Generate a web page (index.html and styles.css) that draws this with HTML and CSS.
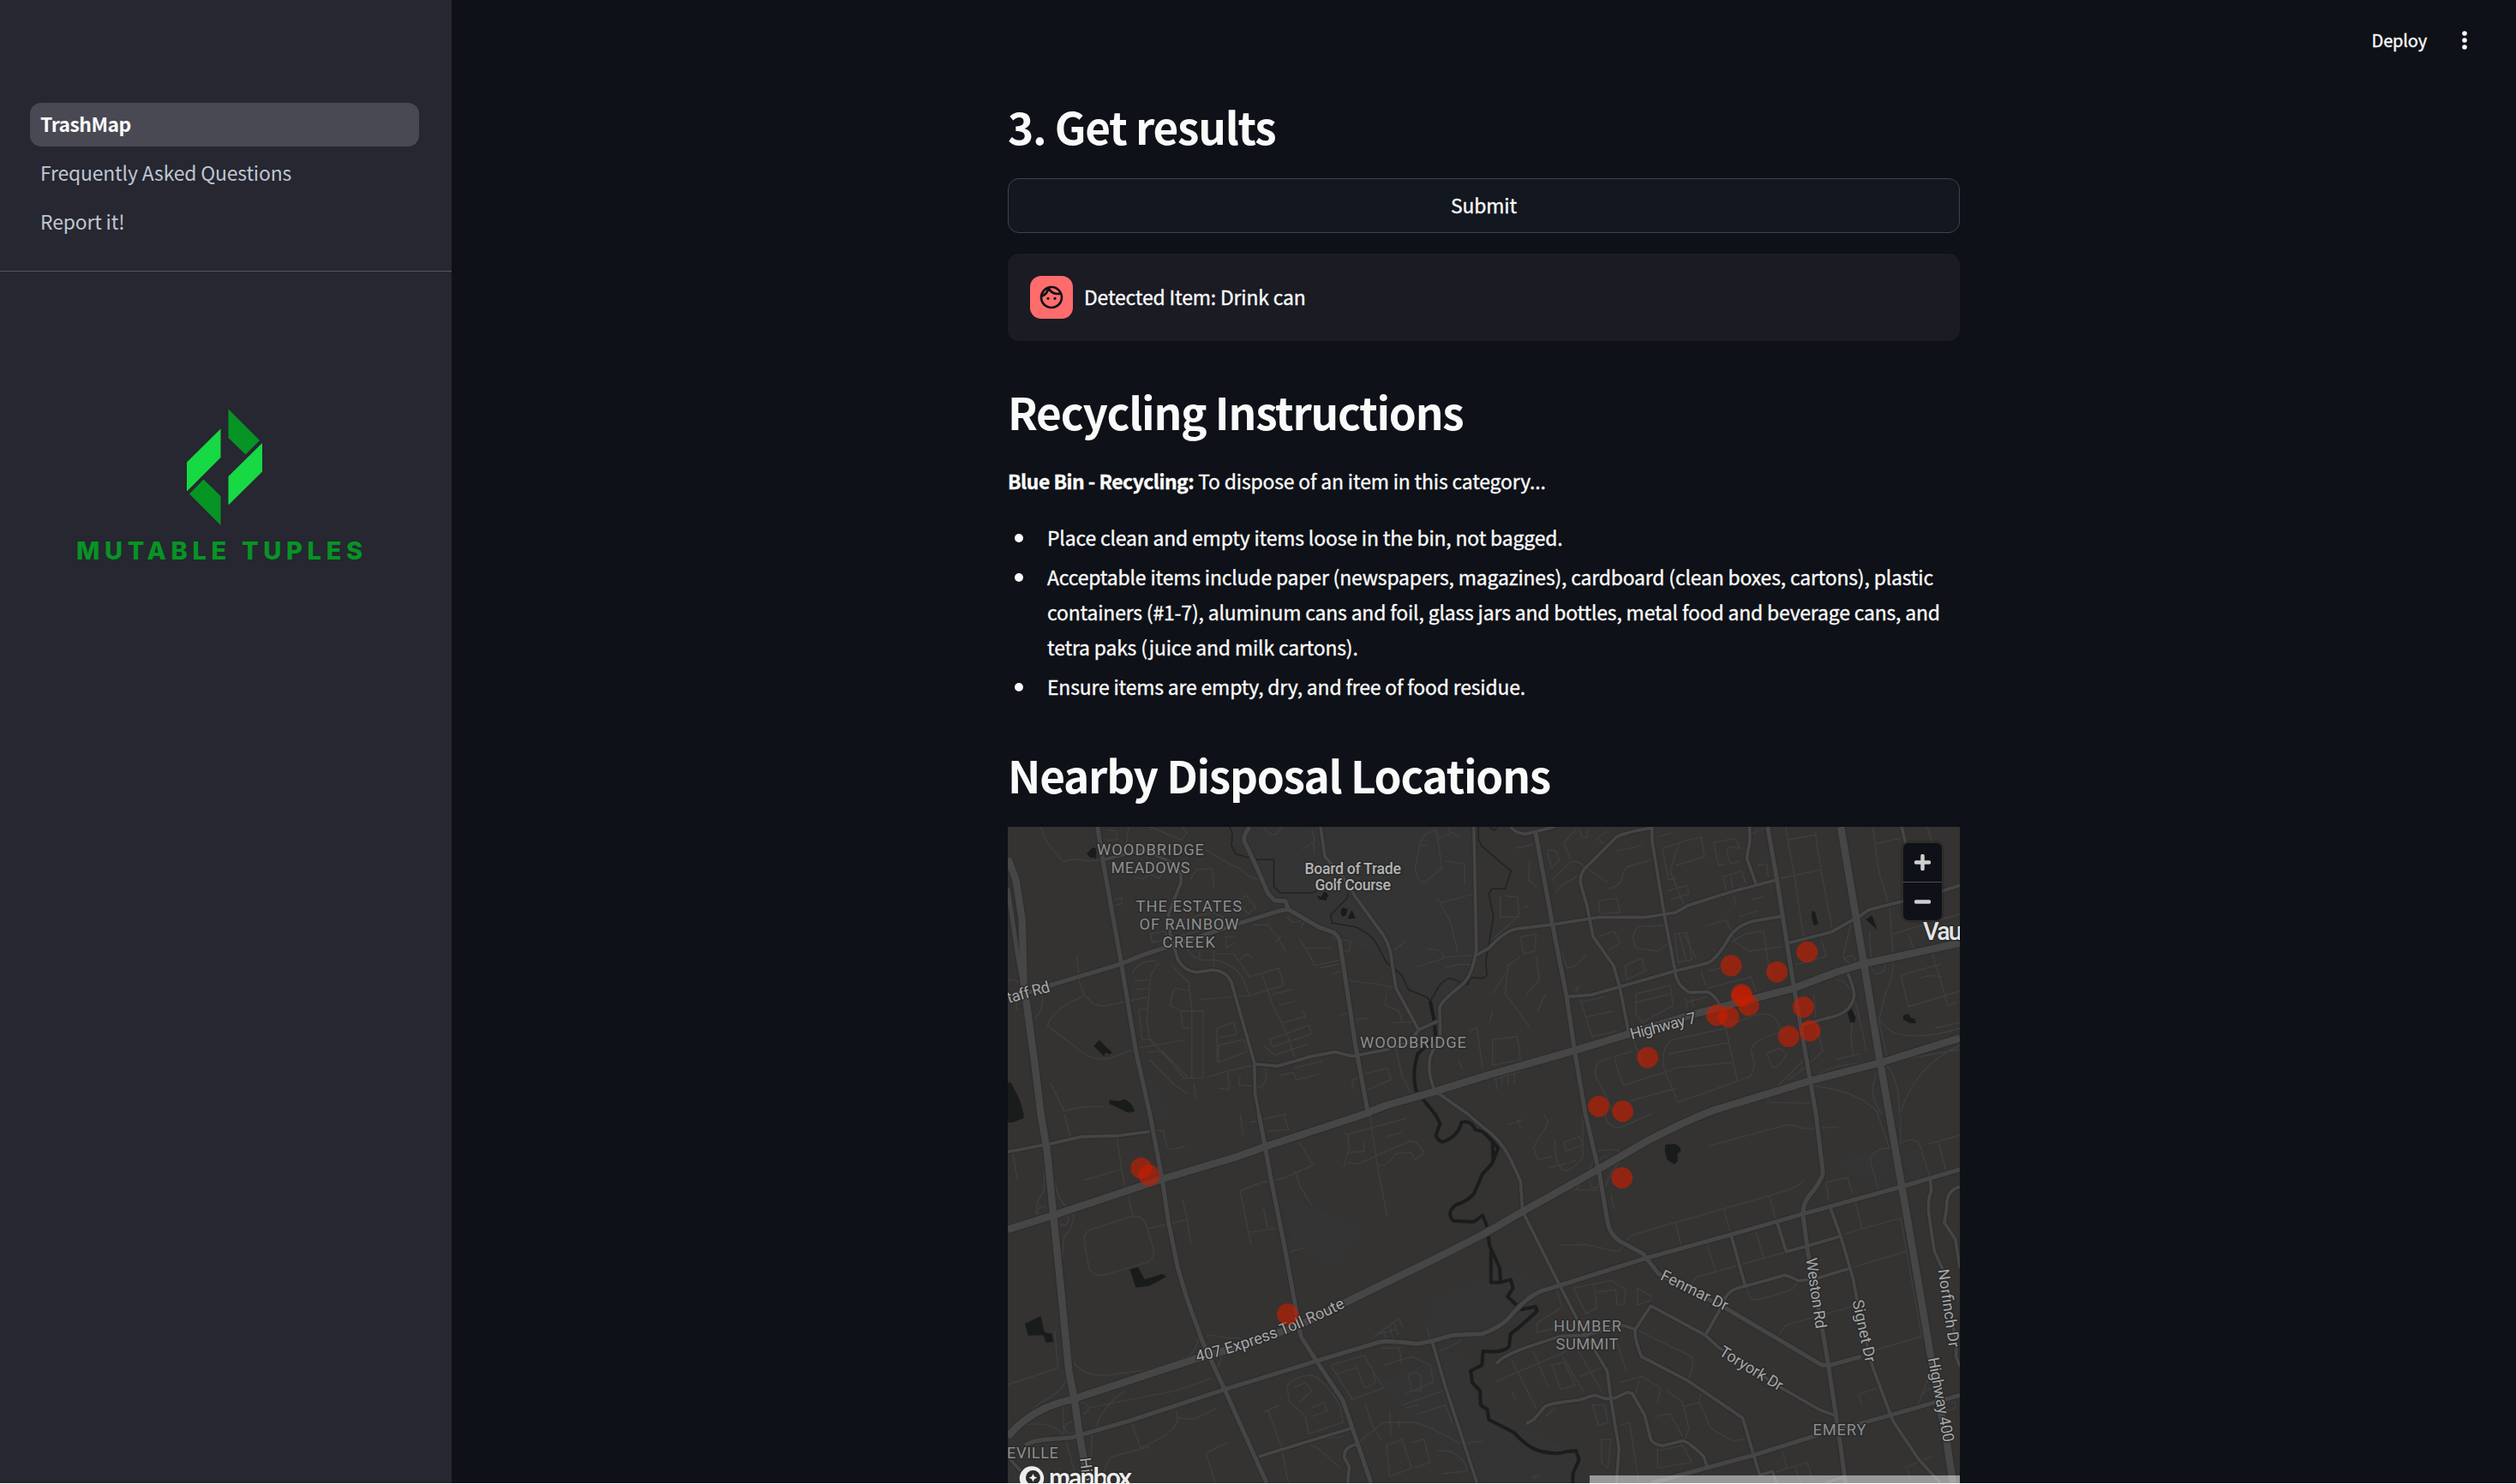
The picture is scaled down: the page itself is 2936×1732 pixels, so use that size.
FILE: index.html
```html
<!DOCTYPE html>
<html lang="en">
<head>
    <meta charset="UTF-8">
    <meta name="viewport" content="width=device-width, initial-scale=1.0">
    <title>TrashMap</title>
    <link rel="stylesheet" href="styles.css">
</head>
<body>
<div class="app">
    <aside class="sidebar">
        <nav class="sidebar-nav">
            <a class="active" href="#">TrashMap</a>
            <a href="#">Frequently Asked Questions</a>
            <a href="#">Report it!</a>
        </nav>
        <svg class="logo" width="340" height="190" viewBox="86 470 340 190">
            <g fill="#069424">
                <path d="M266.5 477.5 L303 514 L286.500 530.500 L266.500 511z"/>
                <path d="M237.500 559.500 L257.500 579 V613 L221 576.500z"/>
            </g>
            <g fill="#17d944">
                <path d="M257.500 500.500 V534 L218 573.500 V539.500z"/>
                <path d="M306 517 V550.500 L266.500 589.500 V556z"/>
            </g>
            <text x="89" y="653" textLength="334">MUTABLE TUPLES</text>
        </svg>
    </aside>

    <main class="main">
        <header class="toolbar">
            <span>Deploy</span>
            <svg width="8" height="24" viewBox="0 0 8 24" fill="#fafafa">
                <circle cx="4" cy="4" r="2.8"/><circle cx="4" cy="12" r="2.8"/><circle cx="4" cy="20" r="2.8"/>
            </svg>
        </header>

        <div class="content">
            <h2 class="first">3. Get results</h2>
            <button class="submit">Submit</button>
            <div class="chat-message">
                <span class="avatar">
                    <svg width="32" height="32" viewBox="0 0 24 24" fill="#0e1117">
                        <path d="M10.250 13a1.250 1.250 0 1 1-2.500 0 1.250 1.250 0 0 1 2.500 0zM15 11.750a1.250 1.250 0 1 0 0 2.500 1.250 1.250 0 0 0 0-2.500zM22 12c0 5.520-4.480 10-10 10S2 17.520 2 12 6.480 2 12 2s10 4.480 10 10zM10.660 4.120C12.060 6.440 14.600 8 17.500 8c.460 0 .910-.050 1.340-.120C17.440 5.560 14.900 4 12 4c-.460 0-.910.050-1.340.120zM4.420 9.470a8.046 8.046 0 0 0 3.660-4.440 8.046 8.046 0 0 0-3.660 4.440zM20 12c0-.780-.120-1.530-.330-2.240-.700.150-1.420.240-2.170.240a9.980 9.980 0 0 1-7.760-3.690A10.016 10.016 0 0 1 4 11.860c.010.040 0 .090 0 .140 0 4.410 3.590 8 8 8s8-3.590 8-8z"/>
                    </svg>
                </span>
                <p>Detected Item: Drink can</p>
            </div>

            <h2>Recycling Instructions</h2>
            <p class="intro"><strong>Blue Bin - Recycling:</strong> To dispose of an item in this category...</p>
            <ul class="steps">
                <li>Place clean and empty items loose in the bin, not bagged.</li>
                <li>Acceptable items include paper (newspapers, magazines), cardboard (clean boxes, cartons), plastic<br>containers (#1-7), aluminum cans and foil, glass jars and bottles, metal food and beverage cans, and<br>tetra paks (juice and milk cartons).</li>
                <li>Ensure items are empty, dry, and free of food residue.</li>
            </ul>

            <h2>Nearby Disposal Locations</h2>
            <div class="map">
                <svg class="map-base" viewBox="44 315 3056 2298" preserveAspectRatio="none">
                    <defs>
                        <g id="wide">
                            <path d="M44 425 L70 500 L90 640 L95 860 L130 1140 L150 1320 L170 1450 L190 1670 L215 1940 L240 2220 L258 2320 L275 2450 L290 2540 L300 2613"/>
                            <path d="M1200 1315 L1260 1290 L1420 1240 L1568 1190 L1858 1100 L2038 1040 L2248 970 L2568 880 L2700 825 L2788 795 L2938 760 L3100 722"/>
                            <path d="M44 1725 L190 1675 L480 1570 L540 1548 L780 1470 L870 1435 L1210 1313"/>
                            <path d="M2718 315 L2768 640 L2793 800 L2838 1100 L2873 1320 L2913 1570 L2968 1920 L3008 2180 L3058 2470 L3078 2613"/>
                            <path class="toll" d="M44 2450 Q120 2350 250 2320 L640 2180 Q950 2090 1120 1985 L1250 1915 L1420 1825 L1568 1743 L1708 1655 L1938 1515 L2088 1420 Q2208 1350 2308 1308 L2618 1205 L2848 1140 L3100 1055"/>
                        </g>
                        <g id="primary">
                            <path d="M332 315 L352 450 L408 790 L455 1100 L500 1320 L540 1550 L560 1700 L590 1860 L620 1970 L670 2120 L740 2285 L875 2613"/>
                            <path d="M44 530 L75 760 L95 880"/>
                            <path d="M2108 2613 L2438 2515 L2628 2450 L2878 2375 L3100 2305"/>
                            <path d="M44 920 L180 870 L408 795 Q480 760 560 735 L780 655 L920 608 L945 604"/>
                            <path d="M820 315 Q800 345 803 365 L840 450 L880 550 L900 572 L935 575 L945 604 L1040 665 L1090 685 Q1108 700 1110 720 L1160 1080 L1200 1315"/>
                            <path d="M850 1320 L870 1435 L890 1555 L935 1800 L985 2100 L1035 2185 L1120 2325 L1150 2420 L1210 2613"/>
                            <path d="M1738 335 L1793 660 L1838 910 L1863 1095 L1898 1320 L1943 1530 L1968 1690 Q1973 1740 2008 1765 L2083 1810 L2133 1880 L2348 2000 L2658 2200 L2683 2200 L2783 2170"/>
                            <path d="M2483 315 L2513 500 L2533 640 L2568 880 L2608 1130 L2638 1320 L2660 1520 Q2663 1545 2618 1605 Q2598 1630 2596 1670 L2613 1810 L2658 2070 L2678 2200 L2718 2490 L2733 2613"/>
                            <path d="M100 2480 Q130 2462 170 2460 L250 2453 L440 2393 L740 2285 L1035 2185 L1240 2118 Q1270 2113 1350 2125 Q1380 2125 1470 2095 L1568 2090 Q1618 2070 1648 2040 Q1708 1960 1758 1940 L1818 1920 L2093 1825 L2368 1742 L2598 1670 L2913 1575 L3100 1515"/>
                        </g>
                        <g id="secondary">
                            <path d="M352 430 L480 395 L570 440 L600 480 L600 510 L560 620 L565 690 L590 780 Q610 820 650 824 L700 816 Q745 818 762 860 L835 1140 L838 1250 L850 1320"/>
                            <path d="M835 1145 L910 1153 L1020 1118 L1095 1103 L1150 1118 L1260 1095 L1330 1070 L1365 1025 L1425 995"/>
                            <path d="M1048 315 L1062 420 L1120 490 L1160 560 L1250 695 Q1275 740 1277 790 L1290 880 L1365 1030"/>
                            <path d="M1540 315 L1548 745 L1540 790 Q1525 850 1500 870 Q1430 930 1430 950 L1432 1040 L1400 1120 Q1390 1180 1415 1240 L1520 1320 L1568 1365 Q1628 1410 1658 1480 L1690 1555 L1696 1660 L1813 1915 L1898 2095 L1968 2220 L1980 2320 L2006 2490 L1998 2613"/>
                            <path d="M1548 765 L1588 740 Q1638 680 1678 672 L1788 658 L1938 632 L2088 632 L2188 615 L2228 590 L2358 545 L2513 500"/>
                            <path d="M1658 315 Q1678 340 1708 340 L1798 315"/>
                            <path d="M2118 318 Q2038 330 1998 350 L1893 465 Q1878 490 1884 520 L1903 590 L1923 700 L1988 800 L2008 875 L2038 1040"/>
                            <path d="M2111 315 L2113 370 L2151 620 L2186 820 Q2190 870 2233 895 L2290 893 Q2318 905 2333 950"/>
                            <path d="M2425 315 L2426 365 L2416 425 L2446 515"/>
                            <path d="M1838 910 L1918 903 L2008 875 L2186 820 L2288 793 Q2318 780 2353 715 Q2378 660 2438 645 L2530 628"/>
                            <path d="M2548 722 L2688 683 L2783 625 L2808 605 L2918 575 L3043 540 L3100 520"/>
                            <path d="M2588 1010 L2698 978 Q2753 960 2761 905 Q2758 870 2740 828"/>
                            <path d="M2913 315 L2926 372"/>
                            <path d="M44 1453 L180 1425 L280 1400 L390 1397 L500 1382"/>
                            <path d="M850 2520 L1148 2420M1165 2478 Q1120 2485 1125 2525 L1140 2555 L1135 2613M1407 2120 L1450 2280 L1550 2613M44 2520 L85 2570"/>
                            <path d="M2513 1698 L2543 1803 L2613 1782 L2713 1750M2366 1745 L2411 1923"/>
                            <path d="M2683 1645 L2718 1750 L2758 1900 L2773 1990 L2818 2200 L2878 2375 L2888 2400 L2968 2530 L3038 2613"/>
                            <path d="M2283 2095 L2328 2010 Q2348 1940 2388 1930 L2538 1885 Q2553 1888 2583 1905 L2643 1895 L2743 1862"/>
                            <path d="M1613 2195 Q1628 2170 1708 2138 L1818 2098 L1898 2095 L2018 2060 L2058 2075"/>
                            <path d="M2283 2095 L2108 1992 L2058 2075 Q2053 2100 2078 2170 L2228 2255 L2403 2385 L2438 2515 L2458 2585 L2498 2572 L2513 2613"/>
                            <path d="M2283 2095 L2328 2140 L2528 2280 L2648 2355 L2703 2378"/>
                            <path d="M1708 2405 L1733 2390 L1768 2345 Q1783 2333 1878 2322 L1928 2305 L1963 2318 L1993 2315 L2033 2295 L2048 2298 L2088 2375 L2108 2460 Q2118 2480 2148 2482 L2208 2465 Q2228 2465 2278 2520 L2290 2560"/>
                            <path d="M3005 1545 L3008 1590 Q2993 1630 3003 1690 L3018 1800 L3043 1860 L3088 2120 L3088 2170 L3100 2205"/>
                            <path d="M3100 1575 Q3053 1590 3058 1650 L3050 1700 L3086 1760 L3100 1860M2668 2613 L2733 2588"/>
                        </g>
                    </defs>

                    <g class="park">
                        <path d="M740 315 H1540 L1548 745 L1420 980 L1280 800 L1090 685 L960 600 L900 560z"/>
                        <path d="M420 1010 L560 1320 H480z"/>
                        <path d="M930 1600 L1180 1720 L1100 1860 L960 1790z"/>
                        <path d="M1400 1980 L1568 1900 L1660 1870 L1780 1920 L1700 2050 L1568 2090 L1400 2110z"/>
                        <path d="M1240 2260 L1500 2140 L1568 2360 L1900 2520 L1850 2613 L1568 2613 L1350 2400z"/>
                        <path d="M2700 1480 L2850 1450 L2860 1550 L2740 1530zM2930 1440 L2980 1450 L2985 1550 L2940 1550z"/>
                    </g>

                    <g class="minor">
                        <path d="M150 315 Q165 370 190 395 L222 437 L260 427 L300 435 L350 430M362 325 L392 330 L395 360 L362 362M432 315 L425 372M500 315 L600 360 L620 335 L605 315M680 395 Q740 440 790 460 Q820 500 848 497M450 490 L480 497 L500 480 L530 495 L545 470M630 500 L650 465 L700 460 L705 530M385 570 L410 565 L410 585 L385 590"/>
                        <path d="M865 315 Q885 350 905 340 L925 315M1020 325 L1030 365 L990 395M1025 370 L1028 410M1385 340 L1420 325 L1430 400 L1438 460 L1380 510 Q1355 500 1352 460 L1368 370zM1365 380 L1392 380M1425 355 L1470 335 L1490 350M1460 315 L1465 350M1450 435 L1510 445 L1510 520"/>
                        <path d="M1422 570 L1435 580 L1540 550M1432 580 L1465 650 L1490 760M1358 805 L1460 770 L1545 765M1450 808 Q1500 790 1535 800M1390 745 Q1440 735 1442 775M1280 750 L1322 715"/>
                        <path d="M502 690 L550 680 L555 710 L508 720zM600 640 L700 615 L735 630 L735 665M785 575 L810 555 L840 600 L815 620zM590 700 L720 660M740 700 L775 700M745 700 L745 740 L775 720M830 660 L880 658 L910 700 L935 750M905 720 L920 698"/>
                        <path d="M265 765 L275 860 L290 905 L320 935 L350 943 L490 912M290 905 L235 935 Q175 980 172 1012 L290 1110 Q330 1135 375 1125 L455 1090 L620 1060M445 830 Q460 780 520 785M450 855 L495 850M455 885 L500 880"/>
                        <path d="M530 790 Q500 830 500 860 L490 1000 L500 1060 L560 1130 L610 1195 H670 V960 H600 L605 1020 H630M570 800 L625 860 L635 960 L635 1195M465 955 L490 950M465 955 L475 1060 L510 1060M490 1105 L540 1100 L620 1190M500 1130 L575 1215 L620 1250M570 905 L580 880 L630 890M570 905 L565 940 L600 960"/>
                        <path d="M620 740 Q640 790 705 780 Q780 800 800 850 L820 905M660 750 V780M705 750 V805M715 760 L770 760 L820 840M790 780 L810 760 L830 775M820 840 L915 810 L930 870 L825 905 L660 920M860 830 L895 940 L940 1040 L965 1125M895 900 L960 885M915 940 L970 925M930 1000 L1000 980 L990 960M885 1060 L1010 1010 L1020 1040 L895 1085zM865 1080 L900 1115 L1010 1075M715 1020 L770 1000 L780 1040 L720 1055M720 1080 L800 1060 L815 1100 L720 1140zM715 1020 L715 1140M690 1190 L750 1170 L830 1150M750 1170 L755 1235 L720 1230M790 1190 L785 1220 L860 1225 Q880 1190 870 1160M640 1210 L650 1270"/>
                        <path d="M940 630 L960 650 L1000 640 L985 670 M980 710 L1000 740 L1080 740M1000 740 L1030 800 L1120 780M1085 700 L1110 720M1085 830 L1120 820M1115 710 L1145 715 L1140 750 L1120 750M1045 810 L1130 790M1110 975 L1140 965M1130 850 L1180 860 L1230 865 L1290 880M1260 900 L1255 940 L1300 960 L1310 1000M1280 1000 L1340 1000M1160 990 L1200 985M920 1185 L960 1175 L970 1200 L1050 1180M960 1160 L1055 1135M1190 1180 L1260 1160 L1275 1200 L1200 1235M1150 1235 V1200 L1180 1190M1290 1090 L1310 1190 L1340 1250M1490 1130 L1505 1165M1520 1030 L1550 1020 L1568 1160"/>
                        <path d="M1678 390 L1740 373M1720 430 L1715 500 L1745 530M1775 400 Q1790 390 1803 400 L1815 430 L1790 460zM1790 500 L1850 440 Q1870 430 1890 450 L1970 510M1800 550 L1820 520 L1900 470M1830 370 L1870 320M1830 370 L1850 430M1875 320 L1890 355 L1905 350 L1905 320M1930 360 L1970 330M1940 360 L1960 375M1993 400 L2020 395 L2080 380M1970 530 Q2000 530 2015 500 Q2020 450 2050 450 L2110 430M1940 575 L2000 565 L2010 615 L1945 620zM1640 555 Q1650 560 1680 560 L1685 620 L1670 640 L1600 710M1625 555 V630 H1685M1700 600 L1715 590"/>
                        <path d="M2145 390 L2200 370 L2270 350 L2280 420 L2190 450M2200 370 L2170 470 L2215 590M2145 390 L2165 500 L2190 495M2160 540 L2225 520 L2230 550 L2170 570M2310 370 L2380 355 L2395 390 L2360 385 L2350 400 L2365 445 L2390 435M2310 370 L2325 450 L2350 445M2340 490 L2400 470 L2415 520 L2350 540zM2365 490 L2380 590M2430 570 L2470 560M2450 450 L2480 445 L2485 490M2130 350 L2180 335M2430 340 L2470 320"/>
                        <path d="M2540 315 L2568 480 L2598 700M2635 330 L2655 470 L2690 670M2550 360 L2640 342M2525 495 L2655 465M2820 315 L2840 470 L2870 580M2830 375 L2930 350M2995 315 L3020 400M2875 600 L2885 755M3100 620 L2885 690M2935 690 L2950 740M3010 755 L3040 860 L3060 940 L3090 930"/>
                        <path d="M2065 665 L2150 660 L2170 720 L2130 750 L2060 740 L2050 700zM2185 690 L2225 685 L2240 780 L2195 790zM2200 690 L2220 780M2215 690 L2255 780M2280 665 L2350 640 L2380 720 L2425 750 L2530 735M2365 720 L2410 690 L2470 680M2470 680 L2490 830M2390 630 L2450 610M2290 820 L2330 810M2290 880 L2430 840 L2445 890M2270 820 L2285 870M2560 800 L2670 770 L2655 710"/>
                        <path d="M1940 700 L1990 680 L2010 720 L1970 750M1820 750 L1840 810 L1870 800 L1900 760M2025 800 L2080 775 L2090 820 L2030 850zM2060 900 L2170 870 L2180 940 L2080 1000 L2060 970zM2060 930 L2170 900M2220 930 L2290 910M2220 915 L2225 950M2240 910 L2245 945M1870 880 L1920 1050 L2000 1030M1880 930 L1960 910M1900 980 L1990 960M1860 890 L1880 870"/>
                        <path d="M1690 700 L1740 690 L1735 750 L1700 760zM1690 770 L1650 800 L1640 900 L1670 940 L1720 1020M1740 770 L1750 850 L1710 900M1640 830 L1600 900M1600 960 L1590 1000M1770 900 L1745 960M1600 1060 L1680 1050 L1690 1130 L1600 1150zM1605 1200 L1690 1170M1610 1195 L1615 1235M1630 1190 V1225M1650 1185 V1220M1670 1180 V1215"/>
                        <path d="M2050 1050 L2080 1150M1990 1120 L2000 1160 L2020 1220M1990 1120 L2050 1100M1940 1140 Q1925 1160 1932 1190 L1960 1250 L1990 1320M1940 1140 L1985 1120M2150 1160 Q2140 1080 2180 1060 L2350 1020M2165 1110 L2360 1070M2180 1160 L2370 1140M2150 1160 L2195 1280 L2425 1190M2345 1000 L2385 1200M2350 1010 L2430 980 Q2500 950 2520 1010 L2525 1030M2425 1190 Q2450 1160 2430 1100 Q2430 1060 2540 1030M2480 1110 L2520 1090 L2545 1110 L2520 1150 L2500 1160zM2020 1220 L2180 1165M2040 1275 L2190 1230M2630 900 L2640 1010 L2660 1100 L2600 1160 L2550 1200"/>
                        <path d="M2910 835 L3040 795M2910 835 L2935 945 L3100 890M3020 1020 L3100 1000M2970 845 Q3010 830 3040 840"/>
                        <path d="M225 1320 L245 1400M395 1405 L410 1520 L420 1575M285 1553 L410 1513M430 1610 L445 1675M60 1460 L75 1550M180 1210 L225 1310 Q290 1290 350 1295M520 1378 H543 L555 1440 Q560 1450 615 1433M605 1620 L620 1690 L632 1780M492 1722 L620 1690"/>
                        <path d="M310 1725 L440 1680 Q480 1670 492 1722 L513 1795 Q510 1835 490 1840 L350 1885 Q320 1890 305 1860 L288 1760 Q290 1735 310 1725z"/>
                        <path d="M790 1590 L860 1560 L930 1545 L1024 1500 L980 1420M790 1590 L825 1780M820 1735 L905 1720M865 1650 L878 1720M940 1807 L1000 1787M965 1520 L985 1580 L1020 1640M1205 1320 L1230 1500 L1262 1680M1120 1385 L1135 1390 L1140 1440 L1122 1508M1140 1390 L1325 1335M1135 1490 L1170 1495 L1250 1455 L1335 1415 Q1370 1420 1380 1460 L1350 1480 L1338 1455 L1290 1460 Q1260 1505 1235 1500M1140 1455 L1190 1450 L1185 1420M1260 1400 L1310 1385M790 1320 L800 1400M820 1350 L940 1320M880 1380 L945 1375 L930 1320"/>
                        <path d="M44 2268 L205 2210 L195 2080M440 2395 L470 2490 Q580 2440 590 2390 L585 2360M590 2385 L640 2390 L715 2350M345 2613 Q360 2530 380 2520 L500 2485M685 2505 L750 2470M680 2505 L710 2613M865 2365 L915 2340M880 2360 L920 2480 L945 2613"/>
                        <path d="M940 2280 Q950 2240 1020 2235 Q1060 2250 1110 2340 L1120 2400 L1010 2440 L1000 2380 L950 2330zM960 2280 L1000 2260 L1020 2290 L980 2330M1020 2350 L1060 2330 L1070 2360 L1020 2380M1080 2200 L1190 2165 L1200 2190 L1250 2280 L1150 2320 L1080 2200M1160 2200 L1190 2280 L1225 2260 L1210 2200M1100 2230 L1160 2210M1240 2140 L1300 2140 L1310 2200M1250 2200 L1340 2170 L1400 2200 L1410 2260 L1320 2300M1330 2240 Q1350 2210 1370 2240 L1370 2290 L1340 2290zM1310 2340 L1440 2290 M1320 2350 L1360 2340"/>
                        <path d="M1220 2100 L1300 2035 L1310 2065M1235 2090 L1290 2075M1250 2080 L1260 2110M1270 2065 L1280 2105M1285 2055 L1297 2095M1390 2070 L1400 2110M1430 2150 Q1480 2130 1500 2110M1170 2470 L1250 2400 L1350 2400 L1400 2420 L1500 2475 L1568 2465M1260 2480 L1310 2460 L1340 2560 L1270 2590zM1340 2470 L1380 2460 L1400 2540 L1350 2560M1420 2500 Q1500 2490 1520 2570 L1440 2580M1360 2370 L1450 2340 L1470 2400M1015 2480 L1040 2490 L1110 2560M1040 2460 L1120 2450M1270 2360 L1275 2440M1300 2395 V2420M1190 2330 L1210 2400 L1240 2460"/>
                        <path d="M1643 1360 L1700 1340M1680 1340 L1690 1370M1730 1430 L1745 1480 L1790 1470M1830 1420 L1880 1400 L1890 1430 L1835 1450zM1780 1510 L1850 1490 L1870 1480M1735 1430 L1780 1350 L1765 1320M1800 1410 Q1800 1500 1830 1520 Q1870 1510 1890 1470 L1890 1320M2293 1432 L2540 1360 Q2560 1355 2600 1372 L2710 1366M1960 1320 Q1970 1370 2010 1368 L2110 1320"/>
                        <path d="M1818 1780 L1900 1778 L2000 1802 Q2010 1800 2020 1780 Q2030 1750 2060 1740 L2540 1590 Q2590 1570 2598 1552M2188 1700 L2205 1780M2342 1650 L2362 1730M2488 1605 L2508 1685M2445 1730 L2470 1825M2290 1778 L2315 1870M2240 1920 Q2240 1900 2260 1890 L2543 1803M1980 1600 L1990 1650M2310 1320 H2300"/>
                        <path d="M2713 1745 L2910 1685 L2978 2100M2765 1630 L2785 1720M2743 1862 L2930 1800M2818 2150 L2978 2100M2520 2095 L2540 2060 L2770 1990M2415 1930 L2430 1970 Q2460 1975 2560 1935 L2580 1910M2670 1560 L2740 1543 L2755 1600M2670 1560 L2680 1620M3000 1425 L3100 1395M3030 1415 L3055 1515M2780 2300 L2835 2280M2775 2300 L2785 2340"/>
                        <path d="M1860 1930 L1980 1903 L2028 1935 L2022 1985 L2000 1990 L1995 1935 L1935 1945M1860 1930 L1900 2020 L1935 2000 L1925 1915M1808 1940 L1820 1990M1740 2080 L1745 2050 L1820 2000M1740 2085 L1900 2050M2065 1930 L2110 1960M2065 1930 L2065 1990 L2110 1970M2070 2080 L2240 2170 Q2250 2190 2230 2245"/>
                        <path d="M1610 2257 L1840 2150M1660 2180 L1740 2350M1730 2150 L1780 2280 M1790 2200 L1830 2190 L1865 2270 L1820 2285zM1820 2160 L1890 2290M1870 2140 L1950 2290M1660 2290 L1675 2320M1880 2240 L1950 2210M1770 2380 L1800 2350M2000 2120 L2030 2220M2010 2260 L2080 2240 L2140 2280 L2130 2330M2070 2250 L2060 2300M2160 2290 L2210 2330 L2230 2420 L2215 2470M2120 2380 L2170 2370 L2210 2450M2215 2345 L2265 2330 L2300 2420 L2370 2465 L2410 2458M2260 2330 L2270 2300"/>
                        <path d="M1920 2340 L1960 2340 L1970 2400 L1940 2410zM1950 2460 L1980 2460 L1970 2560 L1950 2540zM2010 2410 L2040 2400 L2070 2613M2130 2500 L2210 2480 L2240 2540 L2130 2560M2130 2490 L2130 2560M2530 2500 L2545 2560M2490 2580 L2610 2540 L2630 2613M2570 2555 L2590 2613M2920 2560 L3010 2520M2930 2560 L2940 2600M1725 2590 L1750 2590M1735 2585 V2605"/>
                        <path d="M44 850 Q80 845 95 880M95 860 Q60 900 75 960M95 860 Q140 880 155 910 Q160 950 130 990M165 1440 L160 1590 Q130 1630 135 1680M195 1560 Q210 1640 255 1665 Q260 1710 225 1750 L218 1830M165 1645 A18 18 0 1 0 170 1675M210 1675 A18 20 0 1 1 210 1705M255 2190 Q290 2240 360 2235 L500 2215 L620 2170 Q655 2150 655 2090 M235 2230 Q230 2290 150 2330 L60 2420M680 2100 Q700 2090 740 2105 L790 2105M270 2310 L400 2260 L560 2210M300 2350 L580 2290 L700 2245M720 2210 Q725 2160 760 2140M220 2320 L225 2450M325 2420 Q350 2340 420 2290M280 2330 A20 20 0 1 1 285 2370M255 2400 A20 20 0 1 0 260 2435M100 2410 Q200 2390 230 2460 L260 2580M315 2440 L310 2560"/>
                        <path d="M2753 640 L2725 770 Q2740 800 2780 800M2728 780 Q2745 755 2765 775 L2760 800M2810 680 L2815 780 Q2850 780 2860 800 Q2860 830 2830 830 L2810 800M2790 790 Q2800 1000 2900 1040 Q2990 1060 3100 1020M2700 850 Q2750 850 2770 950 L2800 1100M2885 790 Q2890 830 2860 900 L2840 1000 L2870 1130M2765 960 Q2740 1030 2760 1120M2848 1145 Q2700 1130 2610 1205M2848 1145 Q2960 1120 3100 1095M2860 1145 Q2910 1200 2905 1320M2850 1150 Q2790 1240 2850 1320M3100 1080 Q2960 1150 2910 1310M2780 1110 L2700 1130M2620 1220 Q2780 1240 2840 1320M2480 1280 L2620 1282M2600 1130 L2500 1240M1935 1450 Q1980 1440 2010 1450M1945 1480 A18 20 0 1 1 1960 1510M1910 1545 Q1910 1580 1935 1580 L1945 1540M1930 1460 Q1900 1560 1860 1590M1868 1585 L1945 1588M1960 1580 Q1980 1520 2020 1470M2835 1320 L2875 1440M2910 1320 L2910 1430M2838 1585 L2812 1480 Q2820 1440 2880 1440M2915 1420 Q2970 1390 2980 1460 L3005 1545M3005 2230 L2965 2340 L3050 2340M2985 2300 Q3000 2270 3030 2290M3060 2330 Q3090 2320 3085 2350 Q3060 2370 3050 2340"/>
                    </g>

                    <g class="stream">
                        <path d="M755 315 L765 335 L762 380 L775 410 L840 430 L898 430 L898 525 L920 547 L1020 547 L1045 535M1135 545 L1135 562 L1080 625 L1085 652 L1160 665 Q1210 690 1225 720 L1260 790 L1310 835 L1330 885 L1390 912 L1400 925 L1430 870 Q1450 845 1465 845 L1520 868 L1530 842 L1568 845M1555 315 L1555 360 L1568 385 L1660 470 L1640 532 L1598 532 L1588 550 L1603 630 L1578 790 L1583 835 L1568 845M1590 315 L1605 328 L1615 318"/>
                    </g>
                    <g class="river">
                        <path d="M1400 925 L1412 990 L1417 1050 L1360 1110 Q1340 1180 1355 1240 L1400 1300 L1418 1325 L1432 1355 L1418 1395 Q1425 1415 1440 1418 Q1490 1400 1500 1350 Q1530 1340 1545 1375 L1568 1382 L1600 1415 L1618 1440 L1598 1495 L1568 1530 L1540 1600 Q1520 1625 1480 1640 Q1450 1670 1475 1695 L1540 1698 L1568 1675 L1583 1715 L1590 1780 L1623 1860 L1626 1910 L1658 1900 L1666 1930 L1648 1960 L1693 2005 L1738 1995 L1743 2010 L1688 2065 L1658 2090 L1653 2135 Q1628 2160 1570 2150 L1566 2200 L1530 2220 L1535 2260 L1560 2290 L1562 2340 L1583 2355 L1588 2390 L1668 2435 Q1718 2495 1758 2502 Q1808 2515 1838 2502 L1868 2500 L1878 2530 L1858 2580 L1858 2613"/>
                        <path d="M1575 1385 L1600 1420 L1602 1480M1595 1800 L1595 1910 L1626 1910"/>
                    </g>
                    <g class="water">
                        <path d="M318 386 L328 392 L328 425 L308 422 L297 408zM1035 555 L1050 560 L1062 540 L1073 555 L1065 572 L1045 570zM1118 598 L1135 602 L1130 625 L1118 630 L1112 615zM1148 607 L1161 635 L1135 637z"/>
                        <path d="M338 1062 L355 1080 L362 1088 L380 1105 L370 1112 L358 1105 L353 1118 L320 1082zM370 1272 L400 1275 L420 1268 L440 1285 L452 1310 L430 1316 L400 1300 L370 1285zM44 1210 L55 1212 L82 1270 L95 1320 L95 1335 L60 1350 H44z"/>
                        <path d="M436 1865 L462 1856 L484 1900 L540 1880 L553 1890 L500 1922 L455 1928zM98 2055 L150 2028 L162 2085 L186 2090 L190 2118 L168 2122 L158 2095 L110 2096z"/>
                        <path d="M2625 610 L2635 612 L2645 655 L2632 660 L2625 635zM2798 640 L2818 625 L2835 675zM2738 960 L2752 950 L2765 980 L2763 1000 L2748 1000zM2918 975 L2935 970 L2942 983 L2955 987 L2960 1003 L2940 1003 L2918 990zM2155 1428 L2185 1425 Q2205 1435 2205 1450 L2193 1460 L2195 1485 L2183 1498 L2160 1480 L2153 1450z"/>
                    </g>

                    <use href="#secondary" class="secondary casing"/>
                    <use href="#primary" class="primary casing"/>
                    <use href="#wide" class="wide casing"/>
                    <use href="#secondary" class="secondary"/>
                    <use href="#primary" class="primary"/>
                    <use href="#wide" class="wide"/>
                </svg>

                <svg class="map-overlay" viewBox="0 0 1111 766">
                    <defs><path id="toll-path" d="M221 624.500 Q310 603 395 560"/></defs>
                    <g class="place">
                        <text x="104" y="32.700" textLength="125">WOODBRIDGE</text>
                        <text x="120.500" y="53.700" textLength="92">MEADOWS</text>
                        <text x="149.500" y="98.700" textLength="123.500">THE ESTATES</text>
                        <text x="153.500" y="120" textLength="116">OF RAINBOW</text>
                        <text x="180.500" y="141" textLength="61.500">CREEK</text>
                        <text x="411" y="258" textLength="124">WOODBRIDGE</text>
                        <text x="637" y="589" textLength="79">HUMBER</text>
                        <text x="639.500" y="610" textLength="73">SUMMIT</text>
                        <text x="939.500" y="709.700" textLength="62">EMERY</text>
                        <text x="-1" y="737.300" textLength="60">EVILLE</text>
                    </g>
                    <g class="poi">
                        <text x="346.500" y="55" textLength="112.500">Board of Trade</text>
                        <text x="358.500" y="74.300" textLength="88.500">Golf Course</text>
                    </g>
                    <text class="city" x="1068" y="131.700" textLength="46">Vau</text>
                    <g class="street">
                        <text transform="translate(1 206) rotate(-15.700)" textLength="51">taff Rd</text>
                        <text transform="translate(728 248.300) rotate(-14.500)" textLength="79">Highway 7</text>
                        <text textLength="185"><textPath href="#toll-path">407 Express Toll Route</textPath></text>
                        <text transform="translate(760.500 528) rotate(25.900)" textLength="85">Fenmar Dr</text>
                        <text transform="translate(829 616) rotate(31)" textLength="83">Toryork Dr</text>
                        <text transform="translate(931.300 504) rotate(81.900)" textLength="83">Weston Rd</text>
                        <text transform="translate(985.500 553.500) rotate(77.900)" textLength="74">Signet Dr</text>
                        <text transform="translate(1085.500 517) rotate(81.900)" textLength="92">Norfinch Dr</text>
                        <text transform="translate(1073.800 620.500) rotate(79.500)" textLength="100">Highway 400</text>
                        <text transform="translate(84 737) rotate(83)">Highway</text>
                    </g>
                    <g class="markers">
                        <circle cx="844.100" cy="162" r="12.400"/>
                        <circle cx="897.500" cy="169.300" r="12.400"/>
                        <circle cx="932.800" cy="146" r="12.400"/>
                        <circle cx="856.300" cy="195.700" r="12.400"/>
                        <circle cx="856.600" cy="197.800" r="12.400"/>
                        <circle cx="864.400" cy="208.300" r="12.400"/>
                        <circle cx="827.400" cy="220" r="12.400"/>
                        <circle cx="841.200" cy="222" r="12.400"/>
                        <circle cx="928.400" cy="210.300" r="12.400"/>
                        <circle cx="936" cy="238" r="12.400"/>
                        <circle cx="911.300" cy="244.700" r="12.400"/>
                        <circle cx="746.700" cy="269.300" r="12.400"/>
                        <circle cx="689.600" cy="326.300" r="12.400"/>
                        <circle cx="717.600" cy="332" r="12.400"/>
                        <circle cx="716.800" cy="409.700" r="12.400"/>
                        <circle cx="155.600" cy="398.300" r="12.400"/>
                        <circle cx="165" cy="406.700" r="12.400"/>
                        <circle cx="326.400" cy="568.700" r="12.400"/>
                    </g>
                    <g class="mapbox-logo">
                        <circle cx="28" cy="760.500" r="14.200" fill="#ededed"/>
                        <circle cx="29.500" cy="759.500" r="8.500" fill="#2a2a2a"/>
                        <path d="M29.500 755 L31 758.300 L34.300 759.800 L31 761.300 L29.500 764.600 L28 761.300 L24.700 759.800 L28 758.300z" fill="#ededed"/>
                        <text x="48" y="770" textLength="97">mapbox</text>
                    </g>
                </svg>

                <div class="zoom-control">
                    <button aria-label="Zoom in"><svg width="19" height="19" viewBox="0 0 19 19"><path d="M9.500 2v15M2 9.500h15"/></svg></button>
                    <button aria-label="Zoom out"><svg width="19" height="19" viewBox="0 0 19 19"><path d="M2 9.500h15"/></svg></button>
                </div>
                <div class="attribution">© Mapbox © OpenStreetMap <b>Improve this map</b></div>
            </div>
        </div>
    </main>
</div>
</body>
</html>
```
FILE: styles.css
```css
body {
    margin: 0;
    background: #fff;
    font-family: "Noto Sans CJK SC", "Open Sans", sans-serif;
    font-size: 22.9px;
    line-height: 41px;
    letter-spacing: -0.15px;
    color: #fafafa;
}
p, h2, ul {
    margin: 0;
}
button {
    font: inherit;
    letter-spacing: inherit;
    color: inherit;
    padding: 0;
}
strong {
    letter-spacing: -0.5px;
}
.app {
    display: flex;
    height: 1731px;
    overflow: hidden;
    background: #0e1117;
}

/* sidebar */
.sidebar {
    width: 527px;
    flex: none;
    background: #262730;
}
.sidebar-nav {
    display: flex;
    flex-direction: column;
    gap: 6px;
    height: 196px;
    padding: 120px 38px 0 35px;
    border-bottom: 1px solid #53545c;
}
.sidebar-nav a {
    height: 51px;
    line-height: 49px;
    padding: 0 12px;
    border-radius: 13px;
    color: #bfc5d3;
    text-decoration: none;
}
.sidebar-nav a.active {
    background: #494953;
    color: #fafafa;
    font-weight: 700;
    letter-spacing: -0.5px;
}
.logo {
    display: block;
    margin: 153px 0 0 86px;
}
.logo text {
    font: 800 29px Inter, sans-serif;
    fill: #069424;
}

/* main column */
.main {
    flex: 1;
    position: relative;
}
.toolbar {
    position: absolute;
    top: 0;
    right: 56px;
    height: 94px;
    display: flex;
    align-items: center;
    gap: 40px;
    font-size: 20px;
}
.toolbar span {
    padding-bottom: 2px;
}
/* thicken the regular weight slightly */
.toolbar span, .submit, .chat-message p, .intro, .steps {
    -webkit-text-stroke: 0.35px #fafafa;
}
.content {
    width: 1111px;
    margin: 0 auto;
    padding-top: 114px;
}
h2 {
    height: 69px;
    line-height: 65px;
    margin: 49px 0 25px;
    font-size: 51.3px;
    font-weight: 700;
    letter-spacing: -1.25px;
    white-space: nowrap;
}
h2.first {
    margin-top: 0;
}
.submit {
    display: block;
    box-sizing: border-box;
    width: 100%;
    height: 64px;
    padding-bottom: 2px;
    border: 1px solid #41434a;
    border-radius: 13px;
    background: #13171f;
}
.chat-message {
    display: flex;
    align-items: center;
    gap: 13px;
    height: 102px;
    margin-top: 24px;
    padding: 0 26px;
    border-radius: 13px;
    background: #1a1b23;
}
.chat-message p {
    padding-bottom: 2px;
}
.avatar {
    display: flex;
    align-items: center;
    justify-content: center;
    width: 50px;
    height: 50px;
    border-radius: 13px;
    background: #ff6c6c;
}
.steps {
    margin-top: 25px;
    padding: 0;
    list-style: none;
    white-space: nowrap;
}
.steps li {
    position: relative;
    margin-bottom: 5px;
    padding-left: 46px;
}
.steps li::before {
    content: "";
    position: absolute;
    left: 8px;
    top: 16px;
    width: 10px;
    height: 10px;
    border-radius: 50%;
    background: #fafafa;
}

/* map */
.map {
    position: relative;
    height: 766px;
    background: #343332;
    overflow: hidden;
}
.map-base, .map-overlay {
    position: absolute;
    top: 0;
    left: 0;
    width: 1111px;
    height: 766px;
    letter-spacing: 0;
}
.map-base path {
    fill: none;
    vector-effect: non-scaling-stroke;
    stroke-linejoin: round;
}
.map-base .park path {
    fill: #333433;
}
.map-base .water path {
    fill: #191c1b;
}
.minor {
    stroke: #3f3e3e;
    stroke-width: 1.4px;
}
.stream {
    stroke: #212322;
    stroke-width: 1.5px;
}
.river {
    stroke: #1a1d1c;
    stroke-width: 4px;
}
.secondary { stroke: #454545; stroke-width: 3.6px; }
.primary { stroke: #454545; stroke-width: 5px; }
.wide { stroke: #464646; stroke-width: 8.5px; }
.secondary.casing { stroke: #2f2e2e; stroke-width: 6px; }
.primary.casing { stroke: #2f2e2e; stroke-width: 7.5px; }
.wide.casing { stroke: #2f2e2e; stroke-width: 11px; }

.map-overlay text {
    font-family: Roboto, sans-serif;
    font-weight: 400;
    stroke: #2a2a2a;
    stroke-width: 3px;
    paint-order: stroke;
    stroke-linejoin: round;
}
.place text { font-size: 18.3px; fill: #8d8d8d; }
.poi text { font-size: 17.8px; fill: #b4b4b4; }
.street text { font-size: 18.3px; fill: #a6a6a6; }
.map-overlay .city { font-size: 29px; fill: #e4e4e4; }
.map-overlay .poi text, .map-overlay .city { font-weight: 500; }
.markers circle { fill: rgba(200, 30, 0, 0.63); }
.map-overlay .mapbox-logo text {
    font-family: Lato, sans-serif;
    font-size: 30px;
    font-weight: 700;
    fill: #ededed;
}
.zoom-control {
    position: absolute;
    top: 19px;
    left: 1045px;
    width: 45px;
    border-radius: 6px;
    background: #0e1117;
    box-shadow: 0 0 0 3px rgba(0, 0, 0, 0.1);
}
.zoom-control button {
    display: flex;
    align-items: center;
    justify-content: center;
    width: 45px;
    height: 45px;
    border: 0;
    background: none;
}
.zoom-control button + button {
    border-top: 1px solid #4b4d52;
}
.zoom-control path {
    stroke: #cfcfd0;
    stroke-width: 4.5px;
    stroke-linecap: round;
}
.attribution {
    position: absolute;
    top: 757px;
    left: 679px;
    width: 420px;
    padding: 5px 0 0 12px;
    background: rgba(255, 255, 255, 0.5);
    color: rgba(0, 0, 0, 0.75);
    font: 19.2px/25px "Liberation Sans", sans-serif;
    white-space: nowrap;
}
```
